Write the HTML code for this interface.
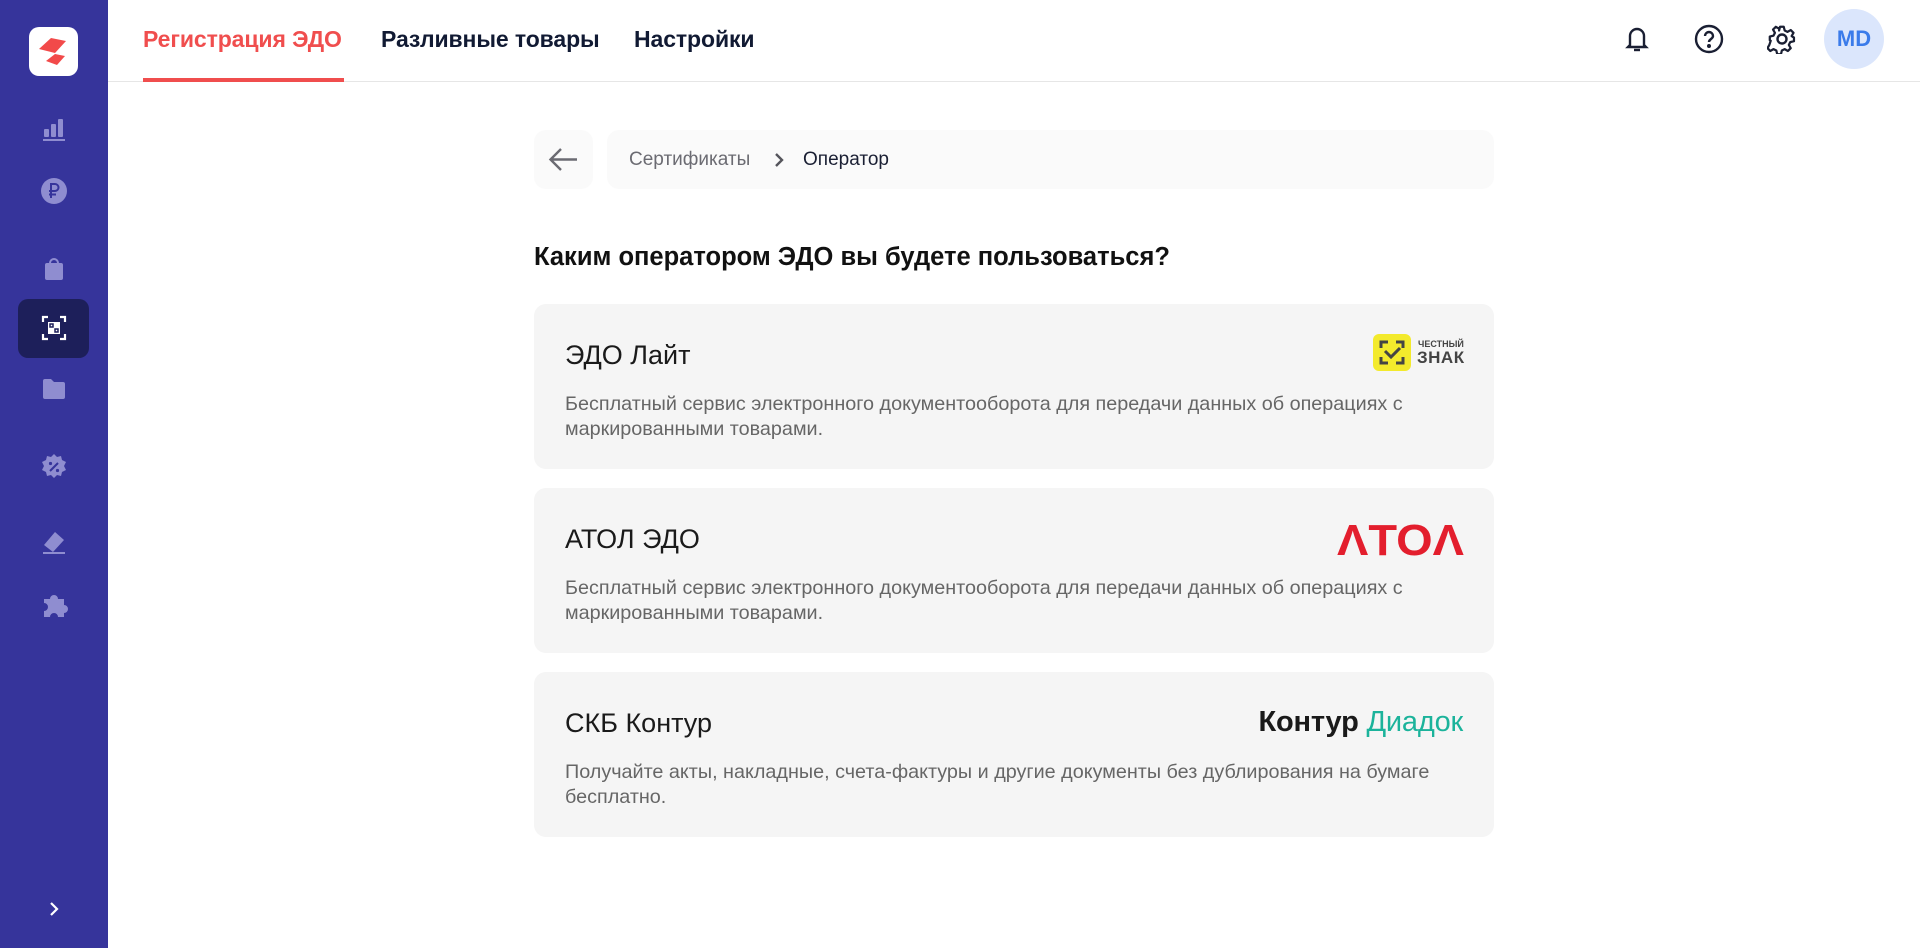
<!DOCTYPE html>
<html><head><meta charset="utf-8"><style>
*{margin:0;padding:0;box-sizing:border-box}
body{width:1920px;height:948px;background:#fff;font-family:"Liberation Sans",Roboto,sans-serif;position:relative;overflow:hidden;color:#1a1a1a}
.sb{position:absolute;left:0;top:0;width:108px;height:948px;background:#36349b}
.logo{position:absolute;left:29px;top:27px;width:49px;height:49px;background:#fff;border-radius:10px}
.ic{position:absolute;left:40px;width:28px;height:28px}
.act{position:absolute;left:18px;top:299px;width:71px;height:59px;background:#1d1f5a;border-radius:10px}
.hdr{position:absolute;left:108px;top:0;right:0;height:82px;border-bottom:1px solid #e6e6e6}
.tab{position:absolute;top:26px;font-size:23px;font-weight:700;color:#111a33;white-space:nowrap;letter-spacing:-0.1px}
.und{position:absolute;left:143px;top:78px;width:201px;height:4px;background:#f04e4e}
.av{position:absolute;left:1824px;top:9px;width:60px;height:60px;border-radius:50%;background:#dbe6fc;color:#3a7bea;font-size:22px;font-weight:700;text-align:center;line-height:60px}
.box{position:absolute;background:#fafafa;border-radius:12px}
.card{position:absolute;left:534px;width:960px;height:165px;background:#f5f5f5;border-radius:12px}
.t{position:absolute;left:31px;top:36px;font-size:27px;color:#1a1a1a}
.d{position:absolute;left:31px;top:88px;width:880px;font-size:19.8px;line-height:24.5px;color:#666}
</style></head><body>
<div class="sb">
 <div class="logo"><svg width="49" height="49" viewBox="0 0 49 49"><path d="M10 22 L22 11 L37 14 L26 26 Z" fill="#f24a4a"/><path d="M17 34 L26 27 L36 29 L28 38 Z" fill="#f24a4a"/></svg></div>
 <svg class="ic" style="top:115px" viewBox="0 0 28 28" fill="#8f8dd0"><rect x="4" y="14" width="5" height="8" rx="1"/><rect x="11" y="9" width="5" height="13" rx="1"/><rect x="18" y="4" width="5" height="18" rx="1"/><rect x="3" y="24" width="22" height="2"/></svg>
 <svg class="ic" style="top:177px" viewBox="0 0 28 28"><circle cx="14" cy="14" r="13" fill="#8f8dd0"/><path d="M11 21V7h4a3.5 3.5 0 010 7h-6M9 17.5h7" stroke="#36349b" stroke-width="2" fill="none"/></svg>
 <svg class="ic" style="top:254px" viewBox="0 0 28 28" fill="#8f8dd0"><rect x="5" y="9" width="18" height="17" rx="2"/><path d="M10 9a4 4 0 018 0" stroke="#8f8dd0" stroke-width="2" fill="none"/></svg>
 <div class="act"></div>
 <svg class="ic" style="top:314px" viewBox="0 0 28 28" fill="none" stroke="#fff" stroke-width="2.2"><path d="M3 8V3h5M20 3h5v5M25 20v5h-5M8 25H3v-5"/><rect x="8" y="8" width="12" height="12" fill="#fff" stroke="none"/><path d="M10 10h3v3h-3zM15 15h3v3h-3z" stroke="#1d1f5a" stroke-width="1.5"/></svg>
 <svg class="ic" style="top:375px" viewBox="0 0 28 28" fill="#8f8dd0"><path d="M3 6a2 2 0 012-2h6l3 3h9a2 2 0 012 2v13a2 2 0 01-2 2H5a2 2 0 01-2-2z"/></svg>
 <svg class="ic" style="top:453px" viewBox="0 0 28 28"><path d="M14 1l3 3 4-1 1 4 4 2-2 4 2 4-4 2-1 4-4-1-3 3-3-3-4 1-1-4-4-2 2-4-2-4 4-2 1-4 4 1z" fill="#8f8dd0"/><path d="M10 18l8-8" stroke="#36349b" stroke-width="2"/><circle cx="10.5" cy="10.5" r="1.6" fill="#36349b"/><circle cx="17.5" cy="17.5" r="1.6" fill="#36349b"/></svg>
 <svg class="ic" style="top:528px" viewBox="0 0 28 28" fill="#8f8dd0"><path d="M4 17L15 4l9 8-11 12z"/><rect x="3" y="24" width="22" height="2"/></svg>
 <svg class="ic" style="top:591px" viewBox="0 0 28 28" fill="#8f8dd0"><path d="M4 8h6a4 4 0 018 0h6v6a4 4 0 010 8v4h-6a4 4 0 00-8 0H4v-6a4 4 0 000-8z"/></svg>
 <svg style="position:absolute;left:45px;top:899px" width="18" height="20" viewBox="0 0 18 20"><path d="M6 4l6 6-6 6" stroke="#fff" stroke-width="2.2" fill="none"/></svg>
</div>
<div class="hdr"></div>
<div class="tab" style="left:143px;color:#f04e4e">Регистрация ЭДО</div>
<div class="tab" style="left:381px">Разливные товары</div>
<div class="tab" style="left:634px">Настройки</div>
<div class="und"></div>
<svg style="position:absolute;left:1623px;top:24px" width="28" height="30" viewBox="0 0 28 30" fill="none" stroke="#1a1f33" stroke-width="2.4"><path d="M7 21V12a7 7 0 0114 0v9l2 2H5z"/><path d="M11 26h6"/></svg>
<svg style="position:absolute;left:1694px;top:24px" width="30" height="30" viewBox="0 0 30 30" fill="none" stroke="#1a1f33" stroke-width="2.4"><circle cx="15" cy="15" r="13"/><path d="M11 12a4 4 0 118 0c0 3-4 3-4 6"/><circle cx="15" cy="22" r="0.8" fill="#1a1f33"/></svg>
<svg style="position:absolute;left:1767px;top:24px" width="30" height="30" viewBox="0 0 30 30" fill="none" stroke="#1a1f33" stroke-width="2.4"><path d="M13 2h4l1 4 3 1.5 3.5-2 3 3-2 3.5L27 13l1 .5v4l-4 1-1.5 3 2 3.5-3 3-3.5-2-3 1.5-1 4h-4l-1-4-3-1.5-3.5 2-3-3 2-3.5L3 17l-1-.5v-4l4-1 1.5-3-2-3.5 3-3 3.5 2L12 6z" stroke-linejoin="round" transform="scale(.93) translate(1,1)"/><circle cx="15" cy="15" r="4.5"/></svg>
<div class="av">MD</div>

<div class="box" style="left:534px;top:130px;width:59px;height:59px"><svg width="59" height="59" viewBox="0 0 59 59" fill="none" stroke="#6b6b72" stroke-width="2.4"><path d="M17 29.5h26M27 19l-10.5 10.5L27 40"/></svg></div>
<div class="box" style="left:607px;top:130px;width:887px;height:59px"></div>
<div style="position:absolute;left:629px;top:149px;font-size:19px;color:#6b6b72">Сертификаты</div>
<svg style="position:absolute;left:772px;top:151px" width="14" height="18" viewBox="0 0 14 18"><path d="M4 3l6 6-6 6" stroke="#55555c" stroke-width="2.4" fill="none"/></svg>
<div style="position:absolute;left:803px;top:149px;font-size:19px;color:#1a1f33">Оператор</div>

<div style="position:absolute;left:534px;top:243px;font-size:25.5px;font-weight:700;color:#111">Каким оператором ЭДО вы будете пользоваться?</div>

<div class="card" style="top:304px">
 <div class="t">ЭДО Лайт</div>
 <div class="d">Бесплатный сервис электронного документооборота для передачи данных об операциях с маркированными товарами.</div>
 <svg style="position:absolute;left:839px;top:30px" width="40" height="38" viewBox="0 0 40 38"><rect width="38" height="37" rx="6" fill="#f3ea2c"/><path d="M8 14V8h7M23 8h7v6M30 23v6h-7M15 29H8v-6" stroke="#444" stroke-width="3" fill="none"/><path d="M12 17l6 6 9-9" stroke="#444" stroke-width="3" fill="none"/></svg>
 <div style="position:absolute;left:884px;top:35px;font-size:9px;font-weight:700;color:#444;line-height:10px">ЧЕСТНЫЙ</div>
 <div style="position:absolute;left:883px;top:44px;font-size:17px;font-weight:900;color:#444;letter-spacing:0.5px">ЗНАК</div>
</div>
<div class="card" style="top:488px">
 <div class="t">АТОЛ ЭДО</div>
 <div class="d">Бесплатный сервис электронного документооборота для передачи данных об операциях с маркированными товарами.</div>
 <svg style="position:absolute;left:803px;top:33px" width="127" height="36" viewBox="0 0 127 36"><text x="0" y="34" font-family="Liberation Sans" font-weight="900" font-size="44" fill="#e31e2d" textLength="127" lengthAdjust="spacingAndGlyphs">ΛTOΛ</text></svg>
</div>
<div class="card" style="top:672px">
 <div class="t">СКБ Контур</div>
 <div class="d">Получайте акты, накладные, счета-фактуры и другие документы без дублирования на бумаге бесплатно.</div>
 <div style="position:absolute;right:31px;top:34px;font-size:29px;white-space:nowrap;letter-spacing:-0.2px"><span style="font-weight:700;color:#1a1a1a">Контур</span> <span style="color:#1bb39b">Диадок</span></div>
</div>
</body></html>
